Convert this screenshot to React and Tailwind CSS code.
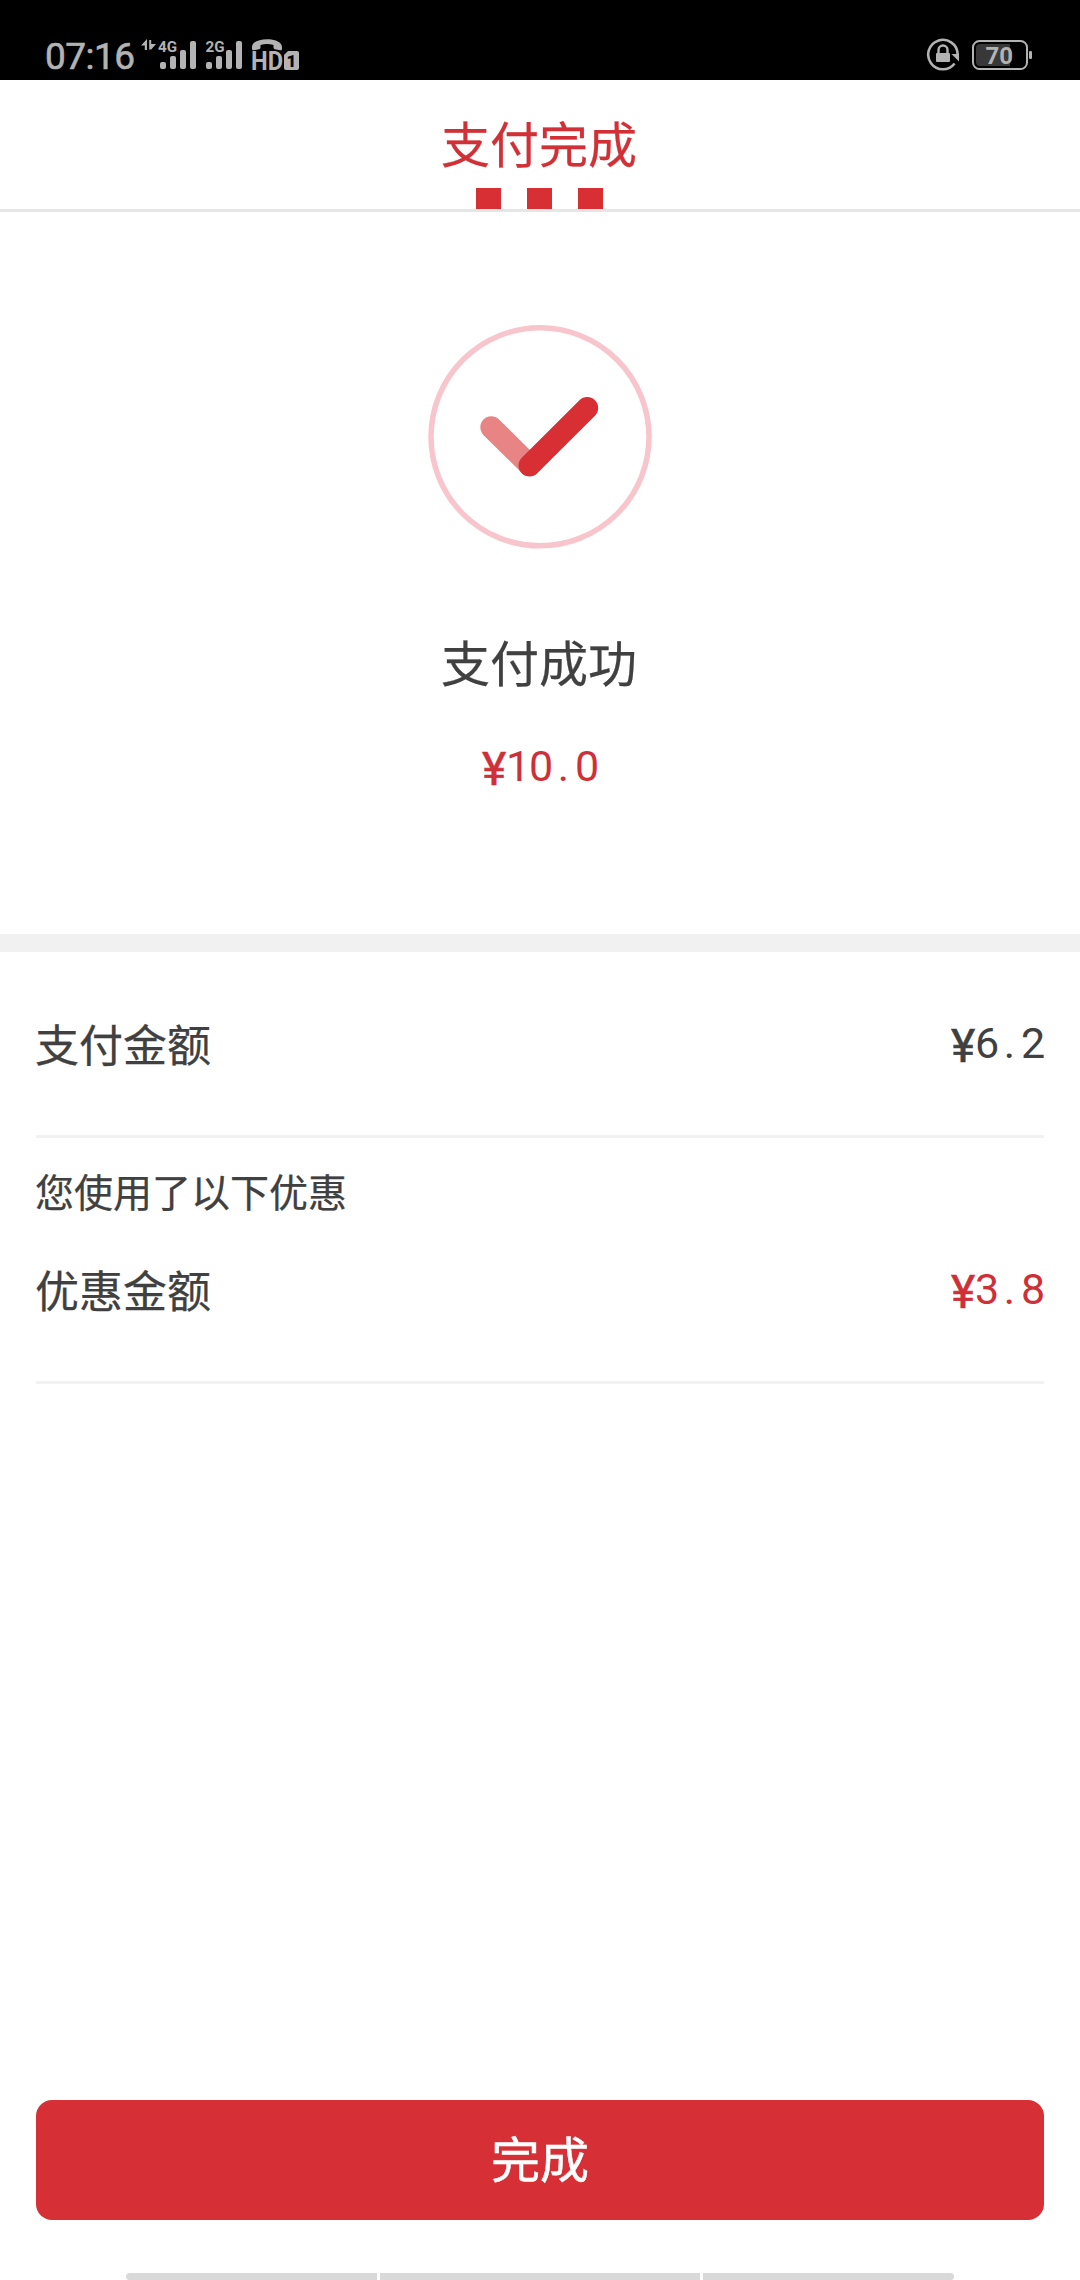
const GREY = '#b3b3b3';

function Arrows() {
  return (
    <svg className="h-20 w-[15px] shrink-0" viewBox="141 0 15 80" fill={GREY}>
      <path d="M147 39v11h-2.200v-4.500H141z M149.200 40h2v4h4.800l-4.800 5.500h-2z" />
    </svg>
  );
}

function Signal({ label, labelX }) {
  return (
    <svg className="h-20 w-[40px] shrink-0" viewBox="157 0 40 80" fill={GREY}>
      <text x={labelX} y="51.500" fontSize="15.200" fontWeight="700" fontFamily="Roboto, sans-serif">
        {label}
      </text>
      <rect x="160" y="62" width="6" height="7" rx="2" />
      <rect x="170" y="56" width="6" height="13" rx="2" />
      <rect x="180" y="50" width="6" height="19" rx="2" />
      <rect x="190" y="41" width="6" height="28" rx="2" />
    </svg>
  );
}

function HdCall() {
  return (
    <svg className="h-20 w-[50px] shrink-0" viewBox="250 0 50 80" fill={GREY}>
      <path d="M252 49v-2c0-10.500 30-10.500 30 0v2c0 1-1 1.500-2 1.200l-5-1c-1-.3-1.500-1-1.500-2v-2.200c-4-1.500-9-1.500-13 0v2.200c0 1-.5 1.700-1.500 2l-5 1c-1 .3-2-.2-2-1.200z" />
      <text x="251" y="69.800" fontSize="25.500" fontWeight="700" fontFamily="Roboto, sans-serif" textLength="32" lengthAdjust="spacingAndGlyphs">
        HD
      </text>
      <path d="M288 51h9q2 0 2 2v15q0 2-2 2h-11q-2 0-2-2V55z" />
      <text x="286.500" y="67" fontSize="17" fontWeight="900" fill="#000" fontFamily="Roboto, sans-serif">
        1
      </text>
    </svg>
  );
}

function RotationLock() {
  return (
    <svg className="h-20 w-[34px] shrink-0" viewBox="926 0 34 80" fill={GREY}>
      <path d="M957.600 54A14.700 14.700 0 1 0 954.600 63.500" fill="none" stroke={GREY} strokeWidth="2.600" />
      <path d="M951.500 54h7.500v7.500z" />
      <rect x="936" y="53" width="14" height="9" rx="1" />
      <path d="M938.500 53v-3a4.500 4.500 0 0 1 9 0v3" fill="none" stroke={GREY} strokeWidth="2.400" />
    </svg>
  );
}

function Battery() {
  return (
    <svg className="h-20 w-[62px] shrink-0" viewBox="971 0 62 80" fill={GREY}>
      <rect x="973" y="41" width="54" height="28" rx="6.500" fill="none" stroke={GREY} strokeWidth="2" />
      <path d="M980 44h30v22h-30q-4 0-4-4v-14q0-4 4-4z" fill="#383838" />
      <rect x="1029" y="51" width="3" height="8" rx="1.200" />
      <text x="985.500" y="64" fontSize="24" fontWeight="700" fontFamily="Roboto, sans-serif">
        70
      </text>
    </svg>
  );
}

function StatusBar() {
  return (
    <div className="flex h-20 w-full shrink-0 bg-black pr-[47px] pl-[45px]">
      <span className="w-24 pt-[35px] font-[Roboto,sans-serif] text-[37px] leading-[43px] tracking-[-0.5px] text-[#b3b3b3] [-webkit-text-stroke:0.6px_#b3b3b3]">
        07:16
      </span>
      <Arrows />
      <div className="ml-px flex gap-[6px]">
        <Signal label="4G" labelX="158" />
        <Signal label="2G" labelX="159.500" />
      </div>
      <div className="ml-[7px] flex">
        <HdCall />
      </div>
      <div className="ml-auto flex gap-[11px]">
        <RotationLock />
        <Battery />
      </div>
    </div>
  );
}

function Amount({ digits }) {
  return (
    <div className="flex h-[60px] font-[Roboto,sans-serif] leading-[60px]">
      <span className="w-6 text-center text-[46px] [-webkit-text-stroke:0.6px_currentColor]">
        <span className="inline-block translate-y-[3px]">¥</span>
      </span>
      {digits.split('').map((d, i) => (
        <span key={i} className="w-[23px] text-center text-[43px]">
          {d}
        </span>
      ))}
    </div>
  );
}

function Row({ label, digits, red }) {
  return (
    <div className="flex items-center justify-between text-[44px] leading-[60px]">
      <span className="-ml-px [-webkit-text-stroke:0.25px_currentColor]">{label}</span>
      <span className={red ? 'text-[#cf3038]' : ''}>
        <Amount digits={digits} />
      </span>
    </div>
  );
}

export default function App() {
  return (
    <div className="flex h-[2280px] w-[1080px] flex-col overflow-hidden bg-white font-['Noto_Sans_CJK_SC',sans-serif] text-[#404040]">
      <StatusBar />
      <header className="flex h-[132px] shrink-0 flex-col items-center justify-end border-b-[3px] border-[#e6e6e6] pr-[2px]">
        <h1 className="mb-[14px] text-[49px] leading-[64px] text-[#d13036] [-webkit-text-stroke:0.25px_currentColor]">支付完成</h1>
        <div className="flex gap-[26px]">
          <i className="h-[21px] w-[25px] bg-[#d72f34]" />
          <i className="h-[21px] w-[25px] bg-[#d72f34]" />
          <i className="h-[21px] w-[25px] bg-[#d72f34]" />
        </div>
      </header>
      <section className="flex h-[722px] shrink-0 flex-col items-center pt-[112px]">
        <svg className="h-[226px] w-[226px]" viewBox="427 324 226 226" fill="none" strokeLinecap="round">
          <circle cx="540" cy="436.800" r="109" stroke="#f7c5cb" strokeWidth="5.500" />
          <path d="M491.300 427.300L529.500 465" stroke="#e98485" strokeWidth="22" />
          <path d="M529.500 465.500L587.200 408" stroke="#d72f34" strokeWidth="22" />
        </svg>
        <p className="mt-[79px] pr-[2px] text-[49px] leading-[64px] [-webkit-text-stroke:0.25px_currentColor]">支付成功</p>
        <div className="mt-[43px] text-[#cf3038]">
          <Amount digits="10.0" />
        </div>
      </section>
      <div className="h-[18px] w-full shrink-0 bg-[#f1f1f1]" />
      <main className="mx-9 flex flex-1 flex-col">
        <div className="h-[186px] border-b-[3px] border-[#f2f2f2] pt-[61px]">
          <Row label="支付金额" digits="6.2" />
        </div>
        <div className="h-[246px] border-b-[3px] border-[#f2f2f2] pt-[27px]">
          <p className="-ml-px text-[39px] leading-[50px] [-webkit-text-stroke:0.25px_currentColor]">您使用了以下优惠</p>
          <div className="mt-[44px]">
            <Row label="优惠金额" digits="3.8" red />
          </div>
        </div>
      </main>
      <button className="mx-9 h-[120px] shrink-0 rounded-2xl bg-[#d63036] pb-[6px] text-[49px] text-white [-webkit-text-stroke:0.5px_currentColor]">
        完成
      </button>
      <div className="mx-auto mt-[53px] flex h-[7px] w-[828px] shrink-0 gap-[3px]">
        <i className="w-[251px] rounded-l-[4px] bg-[#d9d9d9]" />
        <i className="flex-1 bg-[#d9d9d9]" />
        <i className="w-[251px] rounded-r-[4px] bg-[#d9d9d9]" />
      </div>
    </div>
  );
}
